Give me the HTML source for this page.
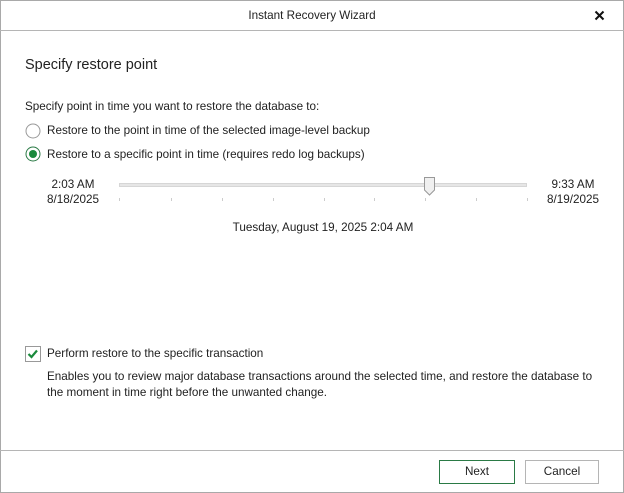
<!DOCTYPE html>
<html><head><style>
*{margin:0;padding:0;box-sizing:border-box}
body{width:624px;height:493px;background:#fff;font-family:"Liberation Sans",sans-serif;font-size:11.7px;color:#222;position:relative;overflow:hidden}
.win{position:absolute;left:0;top:0;width:624px;height:493px;border:1px solid #a9a9a9}
.a{position:absolute;white-space:nowrap}
.hl{position:absolute;left:0;width:624px;height:1px;background:#b5b5b5}
.btn{position:absolute;top:460px;height:24px;border:1px solid #b5b5b5;text-align:center;line-height:22px;background:#fff}
.tick{position:absolute;top:198px;width:1px;height:3px;background:#ccc}
</style></head><body>
<div class="win"></div>
<div class="a" style="left:0;width:624px;text-align:center;top:9px">Instant Recovery Wizard</div>
<svg class="a" style="left:594px;top:10px" width="11" height="11" viewBox="0 0 11 11"><path d="M1.5 1.5L9.5 9.5M9.5 1.5L1.5 9.5" stroke="#111" stroke-width="2"/></svg>
<div class="hl" style="top:30px"></div>
<div class="a" style="left:25px;top:57px;font-size:14.5px">Specify restore point</div>
<div class="a" style="left:25px;top:100px">Specify point in time you want to restore the database to:</div>
<svg class="a" style="left:25px;top:123px" width="16" height="16"><circle cx="8" cy="8" r="7" fill="#fff" stroke="#999"/></svg>
<div class="a" style="left:47px;top:124px">Restore to the point in time of the selected image-level backup</div>
<svg class="a" style="left:25px;top:146px" width="16" height="16"><circle cx="8" cy="8" r="7" fill="#fff" stroke="#2a7a45"/><circle cx="8" cy="8" r="4" fill="#1a8a3c"/></svg>
<div class="a" style="left:47px;top:148px">Restore to a specific point in time (requires redo log backups)</div>
<div class="a" style="left:40px;width:66px;text-align:center;top:177px;line-height:15px">2:03 AM<br>8/18/2025</div>
<div class="a" style="left:540px;width:66px;text-align:center;top:177px;line-height:15px">9:33 AM<br>8/19/2025</div>
<div class="a" style="left:119px;top:183px;width:408px;height:4px;background:#e6e6e6;border:1px solid #d6d6d6"></div>
<svg class="a" style="left:423px;top:177px" width="13" height="19"><path d="M1.5 .5H11.5V13L6.5 18L1.5 13Z" fill="#f0f0f0" stroke="#999"/></svg>
<div class="tick" style="left:119px"></div><div class="tick" style="left:171px"></div><div class="tick" style="left:222px"></div><div class="tick" style="left:273px"></div><div class="tick" style="left:324px"></div><div class="tick" style="left:374px"></div><div class="tick" style="left:425px"></div><div class="tick" style="left:476px"></div><div class="tick" style="left:527px"></div>
<div class="a" style="left:0;width:646px;text-align:center;top:221px">Tuesday, August 19, 2025 2:04 AM</div>
<svg class="a" style="left:25px;top:346px" width="16" height="16"><rect x=".5" y=".5" width="15" height="15" fill="#fff" stroke="#999"/><path d="M3.5 8L6.5 11L12 4.5" stroke="#1a8a3c" stroke-width="2.2" fill="none"/></svg>
<div class="a" style="left:47px;top:347px">Perform restore to the specific transaction</div>
<div class="a" style="left:47px;top:369px;line-height:16px">Enables you to review major database transactions around the selected time, and restore the database to<br>the moment in time right before the unwanted change.</div>
<div class="hl" style="top:450px"></div>
<div class="btn" style="left:439px;width:76px;border-color:#2a7a45">Next</div>
<div class="btn" style="left:525px;width:74px">Cancel</div>
</body></html>
